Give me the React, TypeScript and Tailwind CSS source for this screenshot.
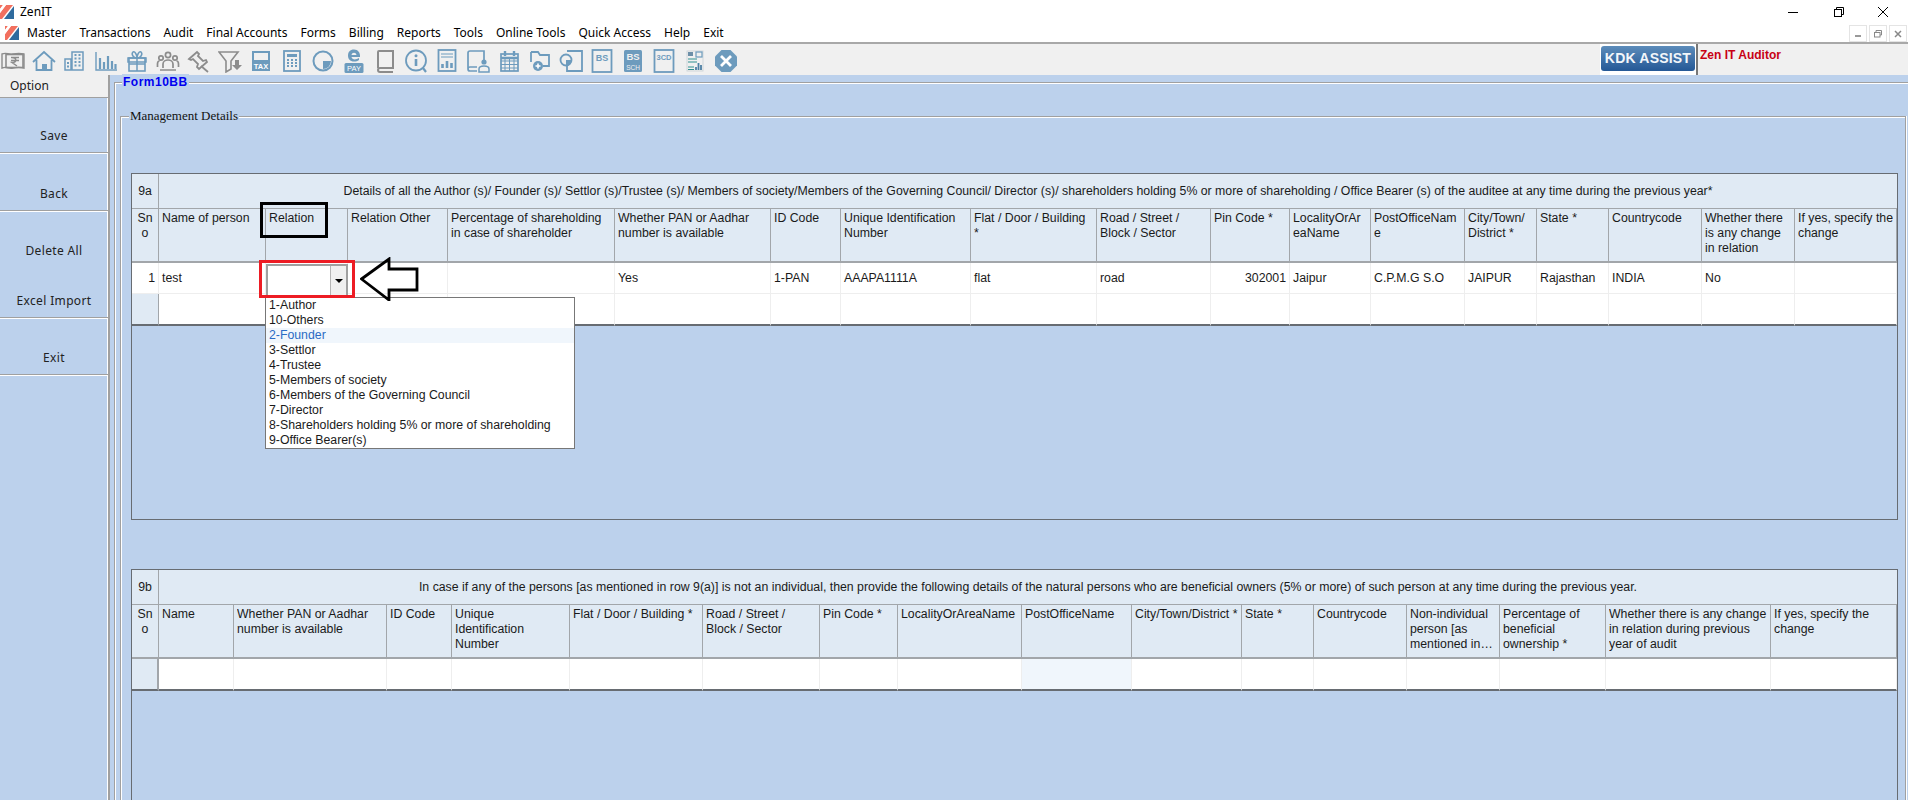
import React from "react";

const B = "#6d9bbd";
const G = "#8c8c8c";

const Logo = ({ className }: { className: string }) => (
  <svg viewBox="0 0 14 14" className={className}>
    <polygon points="0,0 3,0 0,4" fill="#f2705f" />
    <polygon points="6,0 13,0 2,14 0,14 0,8" fill="#f2705f" />
    <polygon points="14,1 14,14 4,14" fill="#2f6b9e" />
    <polygon points="3,0 6,0 0,8 0,4" fill="#fff" />
  </svg>
);

const Ic = ({ children, w = 24 }: { children: React.ReactNode; w?: number }) => (
  <div className="w-[31px] h-[24px] flex items-center justify-center shrink-0">
    <svg viewBox={`0 0 ${w} 24`} className="h-[24px]" style={{ width: w }} fill="none" stroke={B} strokeWidth="1.6">
      {children}
    </svg>
  </div>
);

const icons: React.ReactNode[] = [
  <Ic key="a">
    <g stroke={G}>
      <path d="M1 5c5-2 6 1 11 0s7-1 11 0v14c-4-1-6-1-11 0s-6-2-11 0z" strokeWidth="1.4" />
      <rect x="5" y="5.5" width="17" height="13" strokeWidth="1.6" />
      <path d="M10 8.5h8M10 11.5h8M11 8.5c5 0 5 5 0 5l5 3.5" strokeWidth="1.5" />
    </g>
  </Ic>,
  <Ic key="b">
    <path d="M1 13 12 3l11 10M4.5 11v10h15V11" strokeWidth="1.8" />
    <rect x="10" y="15" width="5" height="6" fill={B} stroke="none" />
  </Ic>,
  <Ic key="c">
    <path d="M2 10h6v11H2zM9 3h11v18H9z" strokeWidth="1.5" />
    <path d="M11.5 6h2M15.5 6h2M11.5 9.5h2M15.5 9.5h2M11.5 13h2M15.5 13h2M11.5 16.5h2M15.5 16.5h2M4 14h2M4 17.5h2" strokeWidth="2" />
  </Ic>,
  <Ic key="d">
    <path d="M2 3v18h21" strokeWidth="1.4" />
    <path d="M6 9v11M10 13v7M14 7v13M18 12v8M21.5 15v5" strokeWidth="2.2" />
  </Ic>,
  <Ic key="e">
    <rect x="4" y="9" width="16" height="13" strokeWidth="1.6" />
    <path d="M3 9h18v4H3zM12 9v13M4 15h16M12 9C8 9 6 5 8 3c2-1 4 3 4 6 0-3 2-7 4-6 2 2 0 6-4 6z" strokeWidth="1.5" />
  </Ic>,
  <Ic key="f">
    <g stroke={G} strokeWidth="1.7">
      <circle cx="12" cy="6" r="2.6" />
      <circle cx="5" cy="9" r="2.2" />
      <circle cx="19" cy="9" r="2.2" />
      <path d="M7 19v-4c0-3 3-4 5-4s5 1 5 4v4M1.5 18v-3c0-2 1-3 2-3M22.5 18v-3c0-2-1-3-2-3M4 21h16" />
    </g>
  </Ic>,
  <Ic key="g">
    <g stroke={G} strokeWidth="1.8">
      <path d="M2 10 10 3l2 2-1 2 5 5 3-1 1 2-8 7-2-2 1-3-5-5-2 1z" />
      <path d="m14 17 7 6" />
    </g>
  </Ic>,
  <Ic key="h">
    <g stroke={G}>
      <path d="M1 3h19l-7 9v8l-5 3V12z" strokeWidth="1.6" />
    </g>
    <path d="M17 11h4v5h3l-5 5-5-5h3z" fill={G} stroke="none" />
  </Ic>,
  <Ic key="i">
    <rect x="3" y="2" width="18" height="20" fill={B} stroke="none" />
    <rect x="5" y="4" width="14" height="7" fill="#f0f0f0" stroke="none" />
    <text x="12" y="20" textAnchor="middle" fontFamily="Liberation Sans, sans-serif" fontWeight="700" fontSize="7.5" fill="#fff" stroke="none">TAX</text>
  </Ic>,
  <Ic key="j">
    <rect x="4" y="2" width="16" height="20" strokeWidth="1.8" />
    <rect x="7" y="5" width="10" height="3" fill={B} stroke="none" />
    <path d="M7 11h2M11 11h2M15 11h2M7 14h2M11 14h2M15 14h2M7 17h2M11 17h2M15 17h2" strokeWidth="2" />
  </Ic>,
  <Ic key="k">
    <circle cx="12" cy="12" r="9.5" strokeWidth="2" />
    <path d="M12 12h8a8 8 0 0 1-8 8z" fill={B} stroke="none" />
  </Ic>,
  <Ic key="l">
    <path d="M12 0.5c-4 0-6 2.5-6 6s2 6 6 6c2 0 3.5-.5 5-1.5v-2c-3 2-7 2-7.500-1H18c.5-4-2-7.500-6-7.500zm-2.500 5.500c.5-3 4.500-3 5 0z" fill={B} stroke="none" />
    <rect x="2.500" y="14" width="19" height="10" rx="1.500" fill={B} stroke="none" />
    <text x="12" y="22" textAnchor="middle" fontFamily="Liberation Sans, sans-serif" fontSize="7.500" fill="#fff" stroke="none">PAY</text>
  </Ic>,
  <Ic key="m">
    <g stroke={G} strokeWidth="2">
      <path d="M5 19V3a1 1 0 0 1 1-1h14v17H7a2 2 0 0 0 0 4h13" />
    </g>
  </Ic>,
  <Ic key="n">
    <circle cx="12" cy="11.500" r="10" strokeWidth="1.800" />
    <path d="M12 10v7" strokeWidth="2.600" />
    <circle cx="12" cy="6.800" r="1.500" fill={B} stroke="none" />
    <path d="M19 19l3 4" strokeWidth="2.200" />
  </Ic>,
  <Ic key="o">
    <rect x="3.500" y="1" width="17" height="21" strokeWidth="1.800" />
    <path d="M6 5h12M6 8h12" strokeWidth="1.200" />
    <path d="M7.500 19v-4M12 19v-7M16.500 19v-5" strokeWidth="2.600" />
  </Ic>,
  <Ic key="p">
    <path d="M2 20V4a2 2 0 0 1 2-2h14v9M2 20a2 2 0 0 0 2 2h7M2 20a2 2 0 0 1 2-2h7" strokeWidth="1.700" />
    <circle cx="18" cy="13" r="2.600" fill={B} stroke="none" />
    <path d="M13 23v-3c0-2 2-3 5-3s5 1 5 3v3z" strokeWidth="1.500" />
  </Ic>,
  <Ic key="q">
    <rect x="4" y="5" width="17" height="17" strokeWidth="1.700" />
    <path d="M8 2v5M17 2v5M4 9h17" strokeWidth="2.400" />
    <path d="M4 12h17M4 15.500h17M4 19h17M8 10v12M12.500 10v12M17 10v12" strokeWidth="1" />
  </Ic>,
  <Ic key="r">
    <path d="M3 3h7l2 3h9v11H15M3 3v10" strokeWidth="1.800" />
    <circle cx="10" cy="17" r="5" fill={B} stroke="none" />
    <path d="M10 14.500v5M7.500 17h5" stroke="#fff" strokeWidth="1.600" />
  </Ic>,
  <Ic key="s">
    <path d="M8 2h15v20H8V15" strokeWidth="1.800" />
    <circle cx="7" cy="11" r="5.500" strokeWidth="1.800" fill="#f0f0f0" />
    <path d="M7 11h5.500a5.500 5.500 0 0 1-5.500 5.500z" fill={B} stroke="none" />
  </Ic>,
  <Ic key="t">
    <rect x="2.500" y="1" width="19" height="22" strokeWidth="1.800" />
    <text x="12" y="11.500" textAnchor="middle" fontFamily="Liberation Sans, sans-serif" fontWeight="700" fontSize="9" fill={B} stroke="none">BS</text>
  </Ic>,
  <Ic key="u">
    <rect x="3" y="1" width="18" height="22" rx="1.500" fill={B} stroke="none" />
    <text x="12" y="11" textAnchor="middle" fontFamily="Liberation Sans, sans-serif" fontWeight="700" fontSize="9.500" fill="#f0f0f0" stroke="none">BS</text>
    <text x="12" y="20.500" textAnchor="middle" fontFamily="Liberation Sans, sans-serif" fontSize="6.500" fill="#f0f0f0" stroke="none">SCH</text>
  </Ic>,
  <Ic key="v">
    <rect x="2.500" y="1" width="19" height="22" strokeWidth="1.800" />
    <text x="12" y="10.500" textAnchor="middle" fontFamily="Liberation Sans, sans-serif" fontWeight="700" fontSize="7.500" fill={B} stroke="none">3CD</text>
  </Ic>,
  <Ic key="w">
    <rect x="4" y="2" width="16" height="20" stroke="#cfd6d9" strokeWidth="1" />
    <rect x="5" y="3" width="5" height="4" fill="#6d8fa8" stroke="none" />
    <rect x="13" y="3" width="6" height="5" stroke={B} strokeWidth="1.200" />
    <path d="M5 10h9M5 13h9" stroke="#2f8f8f" strokeWidth="1.200" />
    <path d="M5 18h6M5 20.500h6" stroke="#2f8f8f" strokeWidth="1.100" />
    <path d="M13 21v-3M15.500 21v-7M18 21v-5" stroke="#4d7fa3" strokeWidth="1.800" />
  </Ic>,
  <Ic key="x">
    <polygon points="7.500,1 16.500,1 23,7.500 23,16.500 16.500,23 7.500,23 1,16.500 1,7.500" fill={B} stroke="none" />
    <path d="m7 7 10 10M17 7 7 17" stroke="#fff" strokeWidth="2.800" />
  </Ic>,
];

const menus = ["Master", "Transactions", "Audit", "Final Accounts", "Forms", "Billing", "Reports", "Tools", "Online Tools", "Quick Access", "Help", "Exit"];

const tableFont = "font-['Liberation_Sans',Arial,sans-serif] text-[12.3px] leading-[15px] text-[#1a1a1a]";
const titleCell = "border-r border-b border-[#a2a6aa] bg-[#e0eaf4] flex items-center justify-center";
const headCell = "border-r border-b-2 border-[#a2a6aa] bg-[#e0eaf4] px-[3px] pt-[2px] overflow-hidden [overflow-wrap:anywhere]";
const dataCell = "border-r border-b border-[#eeeeee] bg-white px-[3px] flex items-center whitespace-nowrap";

const Head = ({ items }: { items: string[] }) => (
  <>
    <div className={headCell + " text-center px-0"}>Sno</div>
    {items.map((t) => (
      <div key={t} className={headCell}>
        <div className="line-clamp-3">{t}</div>
      </div>
    ))}
  </>
);

const head9a = [
  "Name of person", "Relation", "Relation Other", "Percentage of shareholding in case of shareholder",
  "Whether PAN or Aadhar number is available", "ID Code", "Unique Identification Number", "Flat / Door / Building *",
  "Road / Street / Block / Sector", "Pin Code *", "LocalityOrAreaName", "PostOfficeName", "City/Town/District *",
  "State *", "Countrycode", "Whether there is any change in relation", "If yes, specify the change",
];
const row9a = ["test", "", "", "", "Yes", "1-PAN", "AAAPA1111A", "flat", "road", "302001", "Jaipur", "C.P.M.G S.O", "JAIPUR", "Rajasthan", "INDIA", "No", ""];

const head9b = [
  "Name", "Whether PAN or Aadhar number is available", "ID Code", "Unique Identification Number", "Flat / Door / Building *",
  "Road / Street / Block / Sector", "Pin Code *", "LocalityOrAreaName", "PostOfficeName", "City/Town/District *",
  "State *", "Countrycode", "Non-individual person [as mentioned in row 9(a)]", "Percentage of beneficial ownership *",
  "Whether there is any change in relation during previous year of audit", "If yes, specify the change",
];

const options = [
  "1-Author", "10-Others", "2-Founder", "3-Settlor", "4-Trustee", "5-Members of society",
  "6-Members of the Governing Council", "7-Director", "8-Shareholders holding 5% or more of shareholding", "9-Office Bearer(s)",
];

const SideBtn = ({ label, cls, line = true }: { label: string; cls: string; line?: boolean }) => (
  <div className={`${cls} flex flex-col justify-end items-center pb-[7px] shrink-0 ${line ? "border-b border-[#a0a0a0] shadow-[0_1px_0_#fff]" : ""}`}>
    {label}
  </div>
);

export default function App() {
  return (
    <div className="w-[1908px] h-[800px] overflow-hidden flex flex-col bg-white relative">
      {/* Title bar */}
      <div className="h-[24px] shrink-0 flex items-center font-['Noto_Sans',sans-serif] text-[12px] text-black">
        <Logo className="w-[14px] h-[14px] mr-[6px]" />
        <span>ZenIT</span>
        <div className="ml-auto flex items-center h-full">
          <div className="w-[46px] flex justify-center">
            <div className="w-[10px] h-px bg-black" />
          </div>
          <div className="w-[46px] flex justify-center">
            <svg viewBox="0 0 10 10" className="w-[10px] h-[10px]" fill="none" stroke="#000" strokeWidth="1">
              <path d="M2.500 2.500V.5h7v7h-2" />
              <rect x=".5" y="2.500" width="7" height="7" />
            </svg>
          </div>
          <div className="w-[46px] pr-[5px] flex justify-center">
            <svg viewBox="0 0 10 10" className="w-[10px] h-[10px]" stroke="#000" strokeWidth="1">
              <path d="M0 0l10 10M10 0 0 10" />
            </svg>
          </div>
        </div>
      </div>

      {/* Menu bar */}
      <div className="h-[18px] shrink-0 flex items-center font-['Noto_Sans',sans-serif] text-[12px] text-black pl-[5px]">
        <Logo className="w-[14px] h-[14px] mr-[8px]" />
        <div className="flex gap-[13px]">
          {menus.map((m) => (
            <span key={m}>{m}</span>
          ))}
        </div>
        <div className="ml-auto flex gap-px self-start mt-[1px] overflow-hidden">
          {["min", "res", "cls"].map((k) => (
            <div key={k} className="w-[18px] h-[17px] border border-[#e4e4e4] flex items-center justify-center mr-[1px]">
              {k === "min" && <div className="w-[6px] h-[2px] bg-[#999] mt-[5px]" />}
              {k === "res" && (
                <svg viewBox="0 0 8 8" className="w-[8px] h-[8px]" fill="none" stroke="#888">
                  <path d="M2 2V.5h5.500V5H6" />
                  <rect x=".5" y="2.500" width="5.500" height="4.500" />
                </svg>
              )}
              {k === "cls" && (
                <svg viewBox="0 0 8 8" className="w-[8px] h-[8px]" stroke="#888" strokeWidth="1.500">
                  <path d="M1 1l6 6M7 1 1 7" />
                </svg>
              )}
            </div>
          ))}
        </div>
      </div>

      {/* Toolbar */}
      <div className="h-[33px] shrink-0 bg-[#f0f0f0] border-t-2 border-[#a8a8a8] flex items-center">
        <div className="flex items-center -ml-[3px] pt-[2px]">{icons}</div>
        <div className="ml-auto flex h-full w-[308px]">
          <div className="w-[98px] h-full bg-white pl-[1px] pt-[1px] pr-[1px] pb-[2px] border-r-2 border-[#777]">
            <div className="h-[25px] mt-[1px] rounded-[3px] bg-gradient-to-b from-[#5c8cba] to-[#245896] flex items-center justify-center font-['Liberation_Sans',sans-serif] font-bold text-[14px] tracking-[.2px] text-[#f2f6fa]">
              KDK ASSIST
            </div>
          </div>
          <div className="pl-[2px] pt-[4px] font-['Liberation_Sans',sans-serif] font-bold text-[12px] leading-[15px] text-[#c80014]">Zen IT Auditor</div>
        </div>
      </div>

      {/* Body */}
      <div className="flex-1 min-h-0 flex bg-[#bcd1ec]">
        {/* Sidebar */}
        <div className="w-[110px] shrink-0 border-r-2 border-r-[#a0a0a0] shadow-[inset_-1px_0_0_#fff] font-['Noto_Sans',sans-serif] text-[12px] tracking-[.35px] text-[#222]">
          <div className="h-[23px] bg-[#f0f0f0] border-b border-[#a0a0a0] pl-[10px] flex items-center tracking-normal">Option</div>
          <div className="h-[2px]" />
          <SideBtn label="Save" cls="h-[53px]" />
          <SideBtn label="Back" cls="h-[57px] mt-px" />
          <SideBtn label="Delete All" cls="h-[55px] mt-px" line={false} />
          <SideBtn label="Excel Import" cls="h-[51px]" />
          <SideBtn label="Exit" cls="h-[56px] mt-px" />
        </div>

        {/* Main */}
        <div className="flex-1 min-w-0 pl-[4px] pt-[7px] relative">
          <div className="relative border-l border-t border-[#a0a0a0] h-[800px]">
            <div className="absolute left-[7px] -top-[9px] bg-[#bcd1ec] px-[1px] font-['Liberation_Sans',sans-serif] font-bold text-[12px] leading-[16px] tracking-[.5px] text-[#0000f0]">Form10BB</div>
            <div className="border-l border-t border-white h-full pl-[4px] pt-[32px]">
              <div className="w-[1787px] border-r border-white h-full">
                <div className="relative border-l border-t border-r border-[#a0a0a0] h-full">
                  <div className="absolute left-[8px] -top-[9px] bg-[#bcd1ec] px-[1px] font-['Liberation_Serif',serif] text-[13px] leading-[16px] text-[#111]">Management Details</div>
                  <div className="border-l border-t border-white h-full pl-[9px] pt-[55px] flex flex-col">
                    {/* Table 9a */}
                    <div className={`relative w-[1767px] h-[347px] shrink-0 border border-[#676c72] ${tableFont}`}>
                      <div className="grid grid-cols-[27px_107px_82px_100px_167px_156px_70px_130px_126px_114px_79px_81px_94px_72px_72px_93px_93px_102px] grid-rows-[35px_54px_31px_32px]">
                        <div className={titleCell}>9a</div>
                        <div className={titleCell + " col-span-17 border-r-0"}>
                          Details of all the Author (s)/ Founder (s)/ Settlor (s)/Trustee (s)/ Members of society/Members of the Governing Council/ Director (s)/ shareholders holding 5% or more of shareholding / Office Bearer (s) of the auditee at any time during the previous year*
                        </div>
                        <Head items={head9a} />
                        <div className={dataCell + " justify-end"}>1</div>
                        {row9a.map((v, i) => (
                          <div key={i} className={dataCell + (i === 9 ? " justify-end" : "")}>
                            {v}
                          </div>
                        ))}
                        <div className="bg-[#e0eaf4] border-r border-b-2 border-r-[#a2a6aa] border-b-[#676c72]" />
                        {row9a.map((_, i) => (
                          <div key={i} className="bg-white border-r border-r-[#eeeeee] border-b-2 border-b-[#676c72]" />
                        ))}
                      </div>

                      {/* Combo */}
                      <div className="absolute left-[134px] top-[90px] w-[82px] h-[31px] border-2 border-[#a0a0a0] border-b-0 bg-white flex justify-end">
                        <div className="w-[16px] border-l border-[#b5b5b5] bg-[#f0f0f0] flex items-center justify-center">
                          <div className="w-0 h-0 border-x-[4px] border-x-transparent border-t-[4px] border-t-black" />
                        </div>
                      </div>
                      {/* Dropdown list */}
                      <div className="absolute left-[133px] top-[123px] w-[310px] border border-[#777] bg-white z-10 pl-[3px]">
                        {options.map((o) => (
                          <div key={o} className={o === "2-Founder" ? "h-[15px] -ml-[3px] pl-[3px] bg-[#f0f6fc] text-[#2a6bc4] leading-[15px]" : "h-[15px] leading-[15px]"}>
                            {o}
                          </div>
                        ))}
                      </div>
                      {/* Annotations */}
                      <div className="absolute left-[128px] top-[28px] w-[68px] h-[36px] border-[3px] border-black z-20" />
                      <div className="absolute left-[127px] top-[86px] w-[96px] h-[38px] border-[3px] border-[#ed1c24] z-20" />
                      <svg viewBox="0 0 60 44" className="absolute left-[228px] top-[83px] w-[60px] h-[44px] z-20" fill="none" stroke="#000" strokeWidth="2.800">
                        <path d="M1.500 22 29 2v10h28v21H29v10z" />
                      </svg>
                    </div>

                    <div className="h-[49px] shrink-0" />

                    {/* Table 9b */}
                    <div className={`w-[1767px] h-[300px] shrink-0 border border-[#676c72] ${tableFont}`}>
                      <div className="grid grid-cols-[27px_75px_153px_65px_118px_133px_117px_78px_124px_110px_110px_72px_93px_93px_106px_165px_126px] grid-rows-[35px_54px_32px]">
                        <div className={titleCell}>9b</div>
                        <div className={titleCell + " col-span-16 border-r-0"}>
                          In case if any of the persons [as mentioned in row 9(a)] is not an individual, then provide the following details of the natural persons who are beneficial owners (5% or more) of such person at any time during the previous year.
                        </div>
                        <Head items={head9b} />
                        <div className="bg-[#e0eaf4] border-r-2 border-b-2 border-r-[#a2a6aa] border-b-[#676c72]" />
                        {head9b.map((t) => (
                          <div key={t} className={`border-r border-r-[#eeeeee] border-b-2 border-b-[#676c72] ${t === "PostOfficeName" ? "bg-[#f0f6fc]" : "bg-white"}`} />
                        ))}
                      </div>
                    </div>
                  </div>
                </div>
              </div>
            </div>
          </div>
        </div>
      </div>
    </div>
  );
}
